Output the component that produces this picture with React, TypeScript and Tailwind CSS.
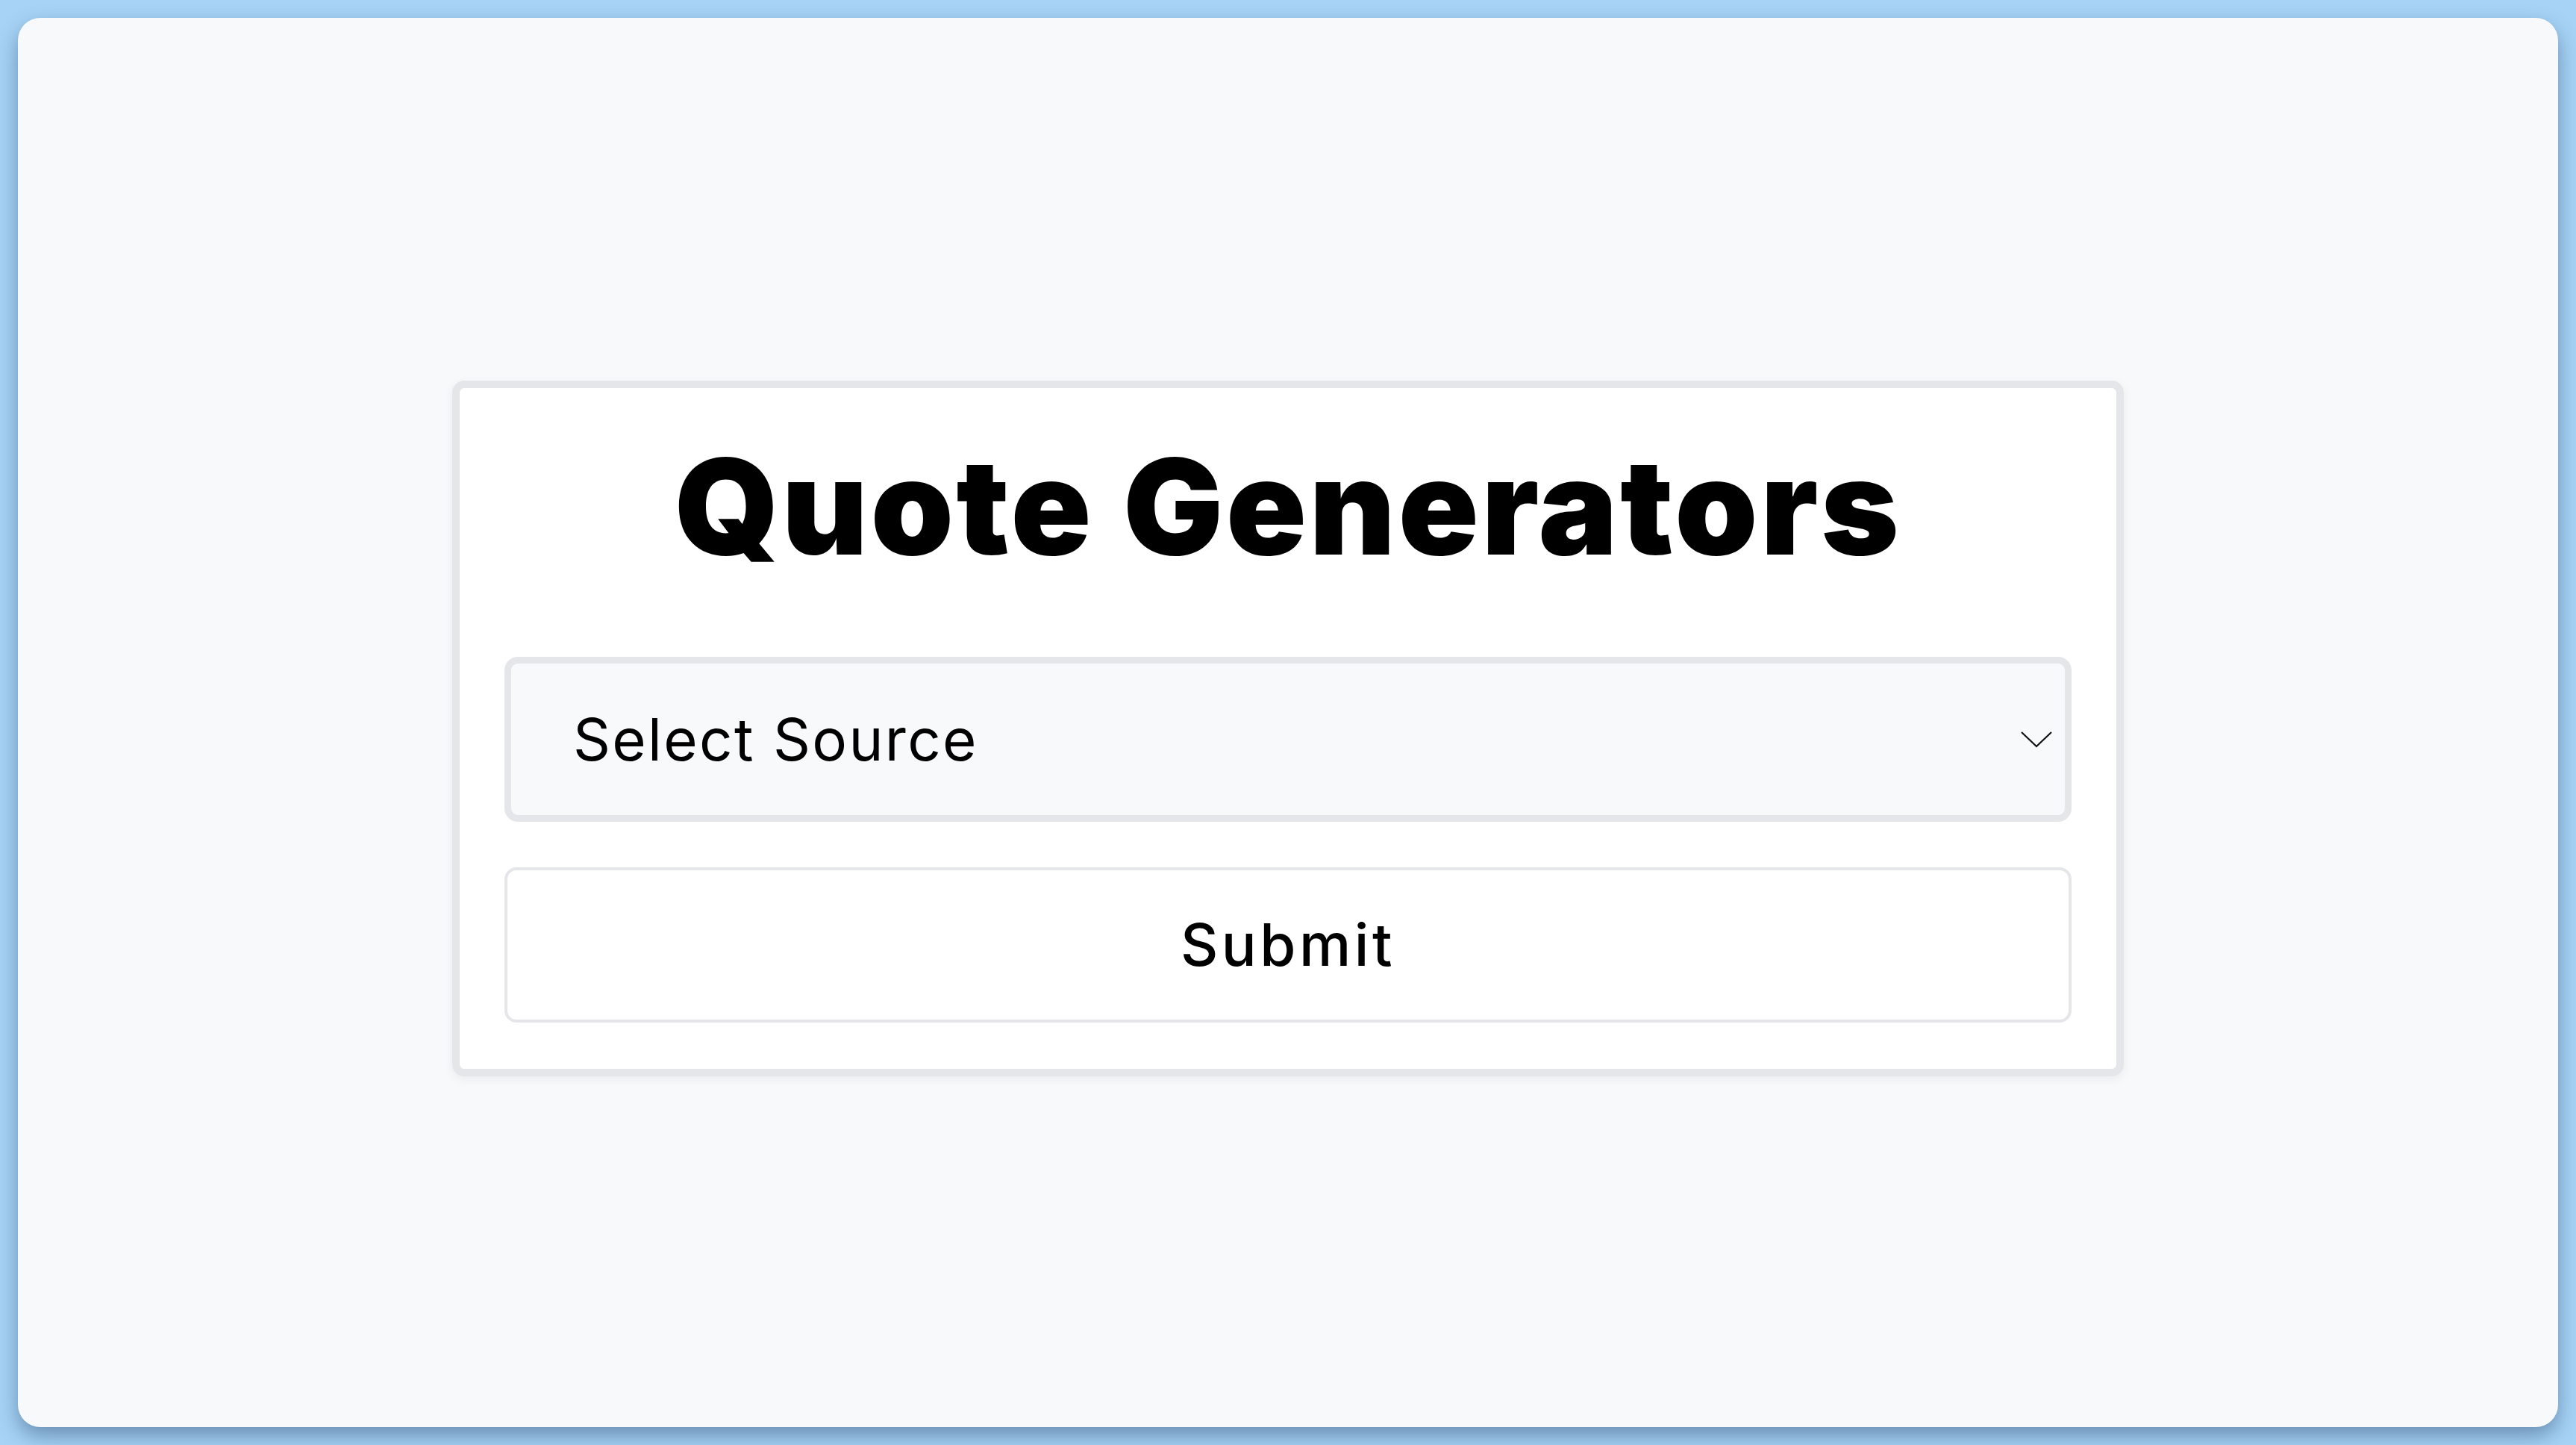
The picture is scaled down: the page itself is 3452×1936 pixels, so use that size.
import React from 'react';

const font = { fontFamily: '"Inter", "Open Sans", sans-serif' };

function Chevron() {
  return (
    <svg width="44" height="24" viewBox="0 0 44 24" fill="none" className="shrink-0">
      <polyline points="2,2 22,21 42,2" stroke="#111" strokeWidth="2.2" strokeLinejoin="miter" />
    </svg>
  );
}

export default function App() {
  return (
    <div className="min-h-screen w-full bg-[#a7d4f6] p-[24px]" style={font}>
      <div className="flex h-[1888px] w-full items-center justify-center rounded-[30px] bg-[#f8f9fb] pt-[16px] shadow-[0_12px_28px_rgba(30,60,100,0.45)]">
        <div className="w-[2240px] rounded-[16px] border-[10px] border-[#e5e6e9] bg-white px-[60px] pb-[62px] pt-[60px] shadow-[0_4px_14px_rgba(0,0,0,0.06)]">
          <h1 className="flex h-[240px] items-center justify-center pb-[42px] text-[178px] font-black leading-none tracking-[3.6px] text-black">
            Quote Generators
          </h1>
          <div className="mt-[60px] flex h-[221px] items-center justify-between rounded-[18px] border-[9px] border-[#e5e6e9] bg-[#f8f9fb] pl-[83px] pr-[16px]">
            <span className="text-[78px] font-normal leading-none tracking-[2.3px] text-black">Select Source</span>
            <Chevron />
          </div>
          <button className="mt-[61px] flex h-[208px] w-full items-center justify-center rounded-[16px] border-[4px] border-[#e5e6e9] bg-white text-[78px] font-medium leading-none tracking-[4.5px] text-black">
            Submit
          </button>
        </div>
      </div>
    </div>
  );
}
